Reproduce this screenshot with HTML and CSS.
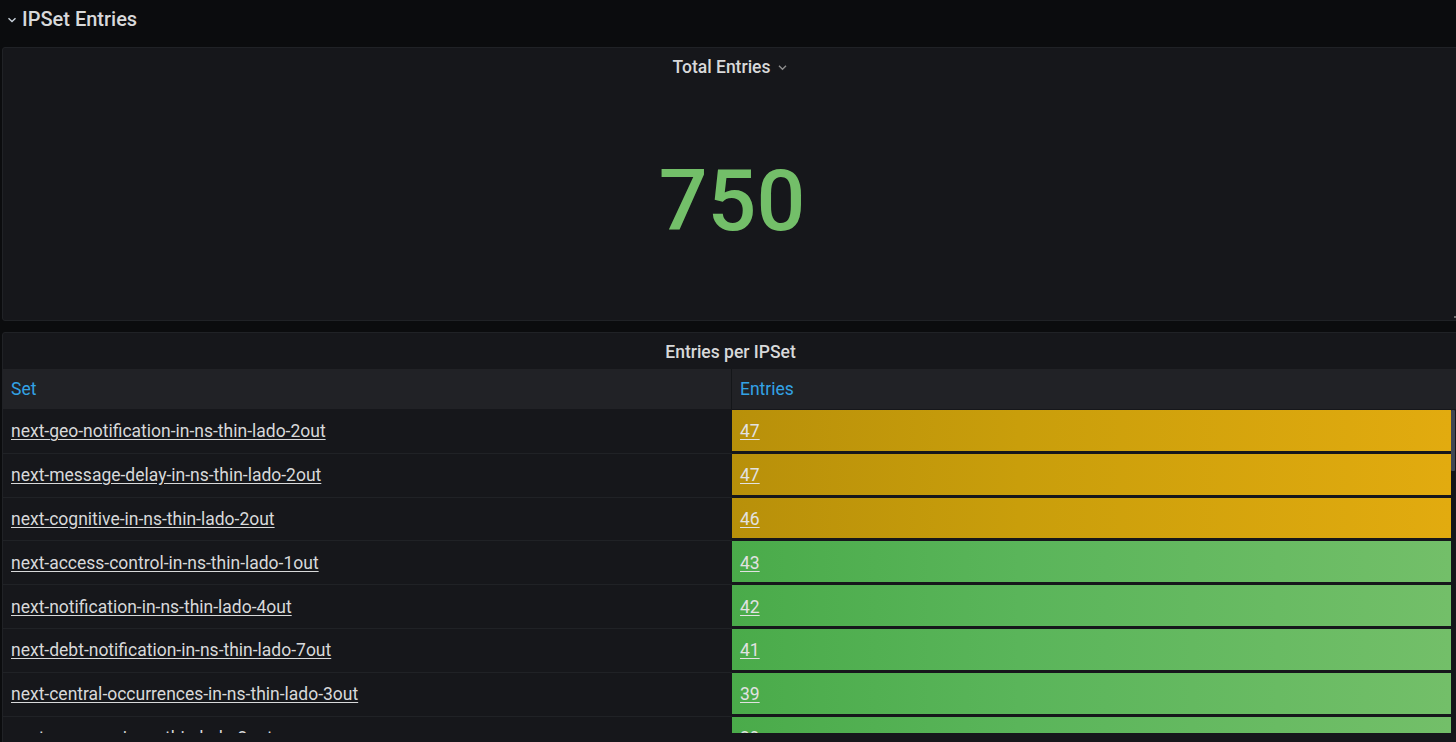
FILE: index.html
```html
<!DOCTYPE html>
<html>
<head>
<meta charset="utf-8">
<link rel="stylesheet" href="styles.css">
</head>
<body>
<div class="dash">
  <div class="row-header">
    <svg class="row-chevron" viewBox="0 0 10 10" width="10" height="10"><path d="M1.5 3.2 L5 6.6 L8.5 3.2" fill="none" stroke="#c7d0d9" stroke-width="1.4"/></svg>
    <span class="row-title">IPSet Entries</span>
  </div>

  <div class="panel panel-stat">
    <div class="panel-header">
      <span class="panel-title">Total Entries</span>
      <svg class="title-chevron" viewBox="0 0 10 10" width="11" height="11"><path d="M1.8 3.4 L5 6.6 L8.2 3.4" fill="none" stroke="#8e8e8e" stroke-width="1.2"/></svg>
    </div>
    <div class="stat-body"><span class="stat-value">750</span></div>
    <div class="resize-handle"></div>
  </div>

  <div class="panel panel-table">
    <div class="panel-header short">
      <span class="panel-title">Entries per IPSet</span>
    </div>
    <div class="table">
      <div class="thead">
        <div class="th th-set">Set</div>
        <div class="th th-entries">Entries</div>
      </div>
      <div class="tbody">
        <div class="rows">
          <div class="tr"><div class="td"><a href="#">next-geo-notification-in-ns-thin-lado-2out</a></div><div class="td bar yellow"><a href="#">47</a></div></div>
          <div class="tr"><div class="td"><a href="#">next-message-delay-in-ns-thin-lado-2out</a></div><div class="td bar yellow"><a href="#">47</a></div></div>
          <div class="tr"><div class="td"><a href="#">next-cognitive-in-ns-thin-lado-2out</a></div><div class="td bar yellow"><a href="#">46</a></div></div>
          <div class="tr"><div class="td"><a href="#">next-access-control-in-ns-thin-lado-1out</a></div><div class="td bar green"><a href="#">43</a></div></div>
          <div class="tr"><div class="td"><a href="#">next-notification-in-ns-thin-lado-4out</a></div><div class="td bar green"><a href="#">42</a></div></div>
          <div class="tr"><div class="td"><a href="#">next-debt-notification-in-ns-thin-lado-7out</a></div><div class="td bar green"><a href="#">41</a></div></div>
          <div class="tr"><div class="td"><a href="#">next-central-occurrences-in-ns-thin-lado-3out</a></div><div class="td bar green"><a href="#">39</a></div></div>
          <div class="tr"><div class="td"><a href="#">next-map-app-in-ns-thin-lado-2out</a></div><div class="td bar green"><a href="#">39</a></div></div>
        </div>
        <div class="scrollbar"><div class="thumb"></div></div>
      </div>
    </div>
  </div>
</div>
</body>
</html>
```

FILE: styles.css
```css
html, body {
  margin: 0;
  padding: 0;
  background: #0b0c0e;
  height: 742px;
  overflow: hidden;
  font-family: Roboto, "Liberation Sans", sans-serif;
  color: #d8d9da;
}

.dash {
  display: flex;
  flex-direction: column;
}

.row-header {
  height: 38px;
  display: flex;
  align-items: center;
  padding-left: 7px;
  gap: 5px;
}

.row-chevron {
  display: block;
  margin-top: 1px;
}

.row-title {
  font-size: 20px;
  font-weight: 500;
  color: #d8d9da;
}

.panel {
  position: relative;
  background: #16171b;
  border: 1px solid #202226;
  border-radius: 3px;
  margin-left: 2px;
  margin-right: -4px;
  display: flex;
  flex-direction: column;
}

.panel-stat {
  margin-top: 9px;
  height: 272px;
}

.panel-header {
  height: 38px;
  display: flex;
  align-items: center;
  justify-content: center;
  gap: 7px;
  padding-right: 1px;
}

.panel-header.short {
  height: 36px;
  padding-top: 1px;
  box-sizing: border-box;
}

.panel-title {
  font-size: 17.5px;
  font-weight: 500;
  color: #d8d9da;
}

.title-chevron {
  display: block;
  margin-top: 1px;
}

.stat-body {
  flex: 1;
  display: flex;
  align-items: center;
  justify-content: center;
  padding-bottom: 4px;
}

.stat-value {
  font-size: 86px;
  font-weight: 500;
  color: #73bf69;
  line-height: 1;
  margin-left: 2px;
}

.resize-handle {
  position: absolute;
  right: 1px;
  bottom: 2px;
  width: 4px;
  height: 6px;
  border-right: 1px solid #6e6e6e;
  border-bottom: 2px solid #6e6e6e;
  box-sizing: border-box;
}

.panel-table {
  margin-top: 11px;
  height: 420px;
}

.table {
  display: flex;
  flex-direction: column;
}

.thead {
  display: grid;
  grid-template-columns: 728px 1fr;
  height: 40px;
  background: #212226;
}

.th {
  display: flex;
  align-items: center;
  padding-left: 8px;
  font-size: 17.5px;
  color: #33a2e5;
}

.th-entries {
  border-left: 1px solid #141619;
}

.tbody {
  display: flex;
  height: 323px;
  overflow: hidden;
  margin-top: 1px;
}

.rows {
  width: 1448px;
  display: flex;
  flex-direction: column;
}

.tr {
  display: grid;
  grid-template-columns: 729px 1fr;
  height: 43.8px;
  flex: none;
}

.td {
  display: flex;
  align-items: center;
  padding-left: 8px;
  font-size: 17.5px;
  box-sizing: border-box;
  border-bottom: 1px solid #202226;
}

.td a {
  color: #d8d9da;
  text-decoration: underline;
  text-underline-offset: 2px;
}

.td.bar {
  border-bottom: 3px solid #16171b;
  height: 43.8px;
}

.td.bar a {
  color: #e2e2e2;
  margin-top: 2px;
}

.td.yellow {
  background: linear-gradient(90deg, #b8900a 0%, #c99e0b 40%, #e2ab0f 100%);
}

.td.green {
  background: linear-gradient(90deg, #4aab4a 0%, #5ab55a 40%, #73bf69 100%);
}

.scrollbar {
  width: 4px;
  flex: none;
  background: #141619;
}

.thumb {
  height: 61px;
  background: #414652;
  border-radius: 1px;
}
```
